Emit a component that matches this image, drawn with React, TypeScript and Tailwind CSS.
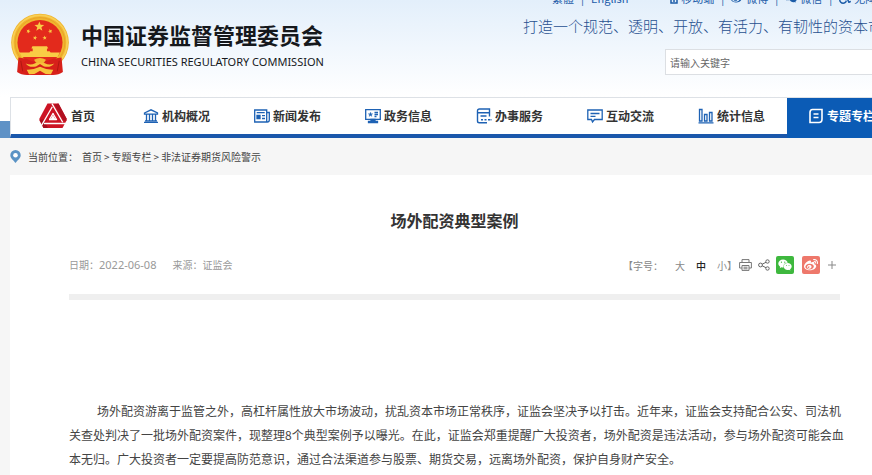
import type { ReactNode } from 'react';
import { FaWeibo, FaWeixin, FaWheelchair } from 'react-icons/fa';

const STAR = '0,-10 2.5,-3.4 9.5,-3.1 4,1.3 5.9,8.1 0,4.2 -5.9,8.1 -4,1.3 -9.5,-3.1 -2.5,-3.4';

const body = [
  '场外配资游离于监管之外\uff0c高杠杆属性放大市场波动\uff0c扰乱资本市场正常秩序\uff0c证监会坚决予以打击。近年来\uff0c证监会支持配合公安、司法机',
  '关查处判决了一批场外配资案件\uff0c现整理8个典型案例予以曝光。在此\uff0c证监会郑重提醒广大投资者\uff0c场外配资是违法活动\uff0c参与场外配资可能会血',
  '本无归。广大投资者一定要提高防范意识\uff0c通过合法渠道参与股票、期货交易\uff0c远离场外配资\uff0c保护自身财产安全。',
];

function Emblem() {
  return (
    <svg viewBox="30 40 180 190" className="h-[63px] w-[60px] shrink-0" aria-hidden="true">
      <circle cx="120" cy="129" r="87" fill="#f0b62f" />
      <circle cx="120" cy="129" r="82" fill="none" stroke="#f9cf55" strokeWidth="5" />
      <circle cx="120" cy="129" r="75" fill="none" stroke="#e59a25" strokeWidth="2" />
      <circle cx="120" cy="129" r="68" fill="#e32a1c" />
      <g fill="#f9cc45">
        <polygon points={STAR} transform="translate(118 81) scale(1.55)" />
        <polygon points={STAR} transform="translate(85 95) scale(.7) rotate(20)" />
        <polygon points={STAR} transform="translate(151 95) scale(.7) rotate(-20)" />
        <polygon points={STAR} transform="translate(105 115) scale(.7) rotate(10)" />
        <polygon points={STAR} transform="translate(134 115) scale(.7) rotate(-10)" />
        <path d="M97 140h44l4 7h-4v8h8l3 4h28l-7 14H65l-7-14h30l3-4h7v-8h-4z" />
      </g>
      <path d="M55 174l25 4q18 12 40 10t40-10l25-4 4 44q-12 9-30 9H81q-18 0-30-9z" fill="#d7201a" />
      <path d="M77 192q22 10 43-12 21 22 43 12-11 14-31 9l-12-7-12 7q-21 5-31-9z" fill="#f7c33c" />
      <path d="M80 211q19 1 40-9 21 10 40 9l-7 14-16-1-17-10-17 10-16 1z" fill="#f7c33c" />
      <path d="M102 181q18-10 36 0l-6 9h-24z" fill="#f2b733" />
      <path d="M62 184l6 32M178 184l-6 32" stroke="#b01712" strokeWidth="3" />
    </svg>
  );
}

function HomeLogo() {
  return (
    <svg viewBox="0 0 56 52" className="h-[26px] w-7 shrink-0" aria-hidden="true">
      <path d="M17 1h22l16 30v4l-8 15H9L1 35v-4z" fill="#cc1424" />
      <path d="M39 1l16 30v4l-6 0L31 3z" fill="#b01020" />
      <path d="M1 33l8 17h9l-9-17z" fill="#a50f1d" />
      <path d="M28 24l4.500 8h-9z" fill="#fff" />
      <g stroke="#fff" strokeWidth="2.600">
        <path d="M10 41h43M20 33h15" />
        <path d="M10 41h43M20 33h15" transform="rotate(120 28 29)" />
        <path d="M10 41h43M20 33h15" transform="rotate(240 28 29)" />
      </g>
    </svg>
  );
}

function Glyph({ children }: { children: ReactNode }) {
  return (
    <svg
      viewBox="0 0 16 16"
      className="size-4 shrink-0"
      fill="none"
      stroke="currentColor"
      strokeWidth="1.300"
      aria-hidden="true"
    >
      {children}
    </svg>
  );
}

const navItems = [
  {
    label: '机构概况',
    icon: (
      <Glyph>
        <path d="M1.500 5L8 1.800 14.500 5v1.200h-13zM3.500 6.500V13M6.500 6.500V13M9.500 6.500V13M12.500 6.500V13M1 14.300h14M2 12.800h12" />
      </Glyph>
    ),
  },
  {
    label: '新闻发布',
    icon: (
      <Glyph>
        <path d="M.7 2h12v12H.7zM12.700 4.500h2.600V12q0 2-2 2h-1M2.700 4.600h8M8 7.700h3M8 10.500h3" />
        <path d="M3 7.500h3v3H3z" fill="currentColor" />
      </Glyph>
    ),
  },
  {
    label: '政务信息',
    icon: (
      <Glyph>
        <path d="M.7 1.700h14.600v9.600H.7zM9.500 4.500h3.500M9.500 6.500h3.500M9.500 8.500h2" />
        <polygon points={STAR} transform="translate(5.500 6.500) scale(.24)" fill="currentColor" />
        <path d="M6 11.500h4v2h2.500v1.200h-9v-1.200H6z" fill="currentColor" />
      </Glyph>
    ),
  },
  {
    label: '办事服务',
    icon: (
      <Glyph>
        <path d="M13.500 8.500V1H3.500Q1.500 1 1.500 3v10q0 1.800 1.800 1.800H11M1.500 4.700h12M4.500 8h6" strokeWidth="1.400" />
        <path d="M5 11.700h2M8.500 11.700h2M12 11.700h2M14.500 11.700h1" strokeWidth="1.500" />
      </Glyph>
    ),
  },
  {
    label: '互动交流',
    icon: (
      <Glyph>
        <path d="M.8 2h14.400v9.500H7.500L5.500 14l-1-2.500H.8zM3.500 5.500h9M3.500 8.300h5" />
      </Glyph>
    ),
  },
  {
    label: '统计信息',
    icon: (
      <Glyph>
        <path d="M1.500 13V1.500H4V13zM6.500 13V6.500H9V13zM11.500 13V4.500H14V13zM.5 14.900h15" />
      </Glyph>
    ),
  },
];

function TopLinks() {
  return (
    <div className="flex items-center pl-[29px] text-[11px] leading-4 text-[#1c5ca8]">
      <a href="#">繁體</a>
      <span className="px-[7px]">|</span>
      <a href="#">English</a>
      <a href="#" className="ml-[42px] flex items-center gap-[3px]">
        <svg viewBox="0 0 8 12" className="h-3 w-2" fill="none" stroke="currentColor" strokeWidth="1.500">
          <path d="M1 1h6v10H1zM3 9h2" />
        </svg>
        移动端
      </a>
      <span className="px-[7px]">|</span>
      <a href="#" className="flex items-center gap-[3px]">
        <FaWeibo className="size-3" />
        微博
      </a>
      <span className="px-[7px]">|</span>
      <a href="#" className="flex items-center gap-[3px]">
        <FaWeixin className="size-3" />
        微信
      </a>
      <span className="px-[7px]">|</span>
      <a href="#" className="flex items-center gap-[3px]">
        <FaWheelchair className="size-3" />
        无障碍
      </a>
    </div>
  );
}

function Header() {
  return (
    <header className="flex overflow-hidden bg-linear-to-b from-[#e3effb] to-white">
      <div className="flex w-[523px] shrink-0 gap-[11px] pt-[13px] pl-[10px]">
        <Emblem />
        <div className="pt-[5px]">
          <h1 className="text-[22px] leading-8 font-bold text-[#15181c]">中国证券监督管理委员会</h1>
          <p className="pt-1 font-['Noto_Sans'] text-[11px] leading-4 text-[#15181c]">
            CHINA SECURITIES REGULATORY COMMISSION
          </p>
        </div>
      </div>
      <div className="-mt-[10px] h-[107px] whitespace-nowrap">
        <TopLinks />
        <p className="pt-2 font-[KaiTi,'Noto_Sans_CJK_SC',sans-serif] text-[15px] leading-6 font-light text-[#27508f]">
          打造一个规范、透明、开放、有活力、有韧性的资本市场
        </p>
        <input
          type="text"
          aria-label="请输入关键字"
          placeholder="请输入关键字"
          className="mt-[11px] ml-[142px] block h-[26px] w-60 border border-[#dcdfe3] bg-white px-1 text-[10px] placeholder:text-[#666]"
        />
      </div>
    </header>
  );
}

function Nav() {
  return (
    <div className="flex overflow-hidden bg-white">
      <div className="mt-6 w-[10px] shrink-0 bg-[#5f92c6]" />
      <nav className="flex h-[41px] grow border-t border-b-4 border-l border-t-[#dde1e6] border-b-[#1a57ab] border-l-[#dde1e6] text-xs font-bold whitespace-nowrap text-[#333]">
        <a href="#" className="flex w-[110px] shrink-0 items-center gap-1 pl-7">
          <HomeLogo />
          首页
        </a>
        {navItems.map((item) => (
          <a key={item.label} href="#" className="flex w-[111px] shrink-0 items-center justify-center gap-[3px]">
            <span className="text-[#1e62b4]">{item.icon}</span>
            {item.label}
          </a>
        ))}
        <a href="#" className="-mb-1 flex w-[111px] shrink-0 items-center gap-[3px] bg-[#0b5bb5] pb-1 pl-[21px] text-white">
          <Glyph>
            <path d="M4.500 1.500h9.500v9.500q0 3.500-3 3.500H2V4.500q0-3 2.500-3zM5.500 6h5M5.500 9.500h5" strokeWidth="1.600" />
          </Glyph>
          专题专栏
        </a>
      </nav>
    </div>
  );
}

function Breadcrumb() {
  return (
    <div className="flex h-[37px] items-center pl-[10px] text-[10px] text-[#444]">
      <svg viewBox="0 0 11 13" className="mr-[7px] h-[13px] w-[11px]" aria-hidden="true">
        <path d="M5.500 0a5.200 5.200 0 0 1 5.200 5.200C10.700 8.500 7 10.500 5.500 13 4 10.500.3 8.500.3 5.200A5.200 5.200 0 0 1 5.500 0z" fill="#5a93c5" />
        <circle cx="5.500" cy="5.200" r="2.300" fill="#fff" />
      </svg>
      <span className="mr-1">{'当前位置\uff1a'}</span>
      <a href="#">首页</a>
      <span className="px-0.5">&gt;</span>
      <a href="#">专题专栏</a>
      <span className="px-0.5">&gt;</span>
      <a href="#">非法证券期货风险警示</a>
    </div>
  );
}

function Toolbar() {
  return (
    <div className="flex items-center text-[10px] text-[#888]">
      <span className="mr-3">{'【字号\uff1a'}</span>
      <button type="button" className="mr-[11px]">大</button>
      <button type="button" className="mr-[11px] font-medium text-[#222]">中</button>
      <button type="button">小</button>
      <span>】</span>
      <button type="button" aria-label="打印" className="ml-0.5">
        <svg viewBox="0 0 13 12" className="h-3 w-[13px]" fill="none" stroke="#777" aria-hidden="true">
          <path d="M3 3.500V.6h7v2.900M3 9H.6V3.500h11.800V9H10M3 6.500h7v4.900H3zM4.500 8.200h4M4.500 9.800h4" />
        </svg>
      </button>
      <button type="button" aria-label="分享" className="ml-[6px]">
        <svg viewBox="0 0 12 12" className="size-3" fill="none" stroke="#666" aria-hidden="true">
          <circle cx="2.500" cy="6" r="1.900" />
          <circle cx="9.500" cy="2.500" r="1.700" />
          <circle cx="9.500" cy="9.500" r="1.700" />
          <path d="M4.200 5.200L8 3.300M4.200 6.800L8 8.700" />
        </svg>
      </button>
      <button
        type="button"
        aria-label="微信"
        className="ml-[6px] flex size-[18px] items-center justify-center rounded-xs bg-[#3eb83e] text-white"
      >
        <FaWeixin className="size-[14px]" />
      </button>
      <button
        type="button"
        aria-label="微博"
        className="ml-2 flex size-[18px] items-center justify-center rounded-xs bg-[#ee786b] text-white"
      >
        <FaWeibo className="size-[14px]" />
      </button>
      <button type="button" aria-label="更多" className="mr-1 ml-2">
        <svg viewBox="0 0 8 8" className="size-2" stroke="#888" aria-hidden="true">
          <path d="M4 0v8M0 4h8" />
        </svg>
      </button>
    </div>
  );
}

export default function App() {
  return (
    <div lang="zh-CN" className="min-h-screen overflow-hidden bg-[#f6f6f6] font-['Noto_Sans_CJK_SC',sans-serif]">
      <Header />
      <Nav />
      <Breadcrumb />
      <main className="ml-[10px] min-h-[300px] bg-white pt-[31px] pr-8 pl-[59px]">
        <h2 className="text-center text-base leading-7 font-bold text-[#333]">场外配资典型案例</h2>
        <div className="mt-[18px] flex h-[26px] items-center justify-between">
          <p className="flex items-baseline gap-4 text-[10px] text-[#999]">
            <span>
              {'日期\uff1a'}
              <span className="font-['Noto_Sans'] text-[11px]">2022-06-08</span>
            </span>
            <span>{'来源\uff1a证监会'}</span>
          </p>
          <Toolbar />
        </div>
        <hr className="mt-4 h-[6px] border-0 bg-[#efefef]" />
        <p className="pt-[99px] text-xs leading-6 whitespace-nowrap text-[#444]">
          <span className="pl-7">{body[0]}</span>
          <br />
          {body[1]}
          <br />
          {body[2]}
        </p>
      </main>
    </div>
  );
}
